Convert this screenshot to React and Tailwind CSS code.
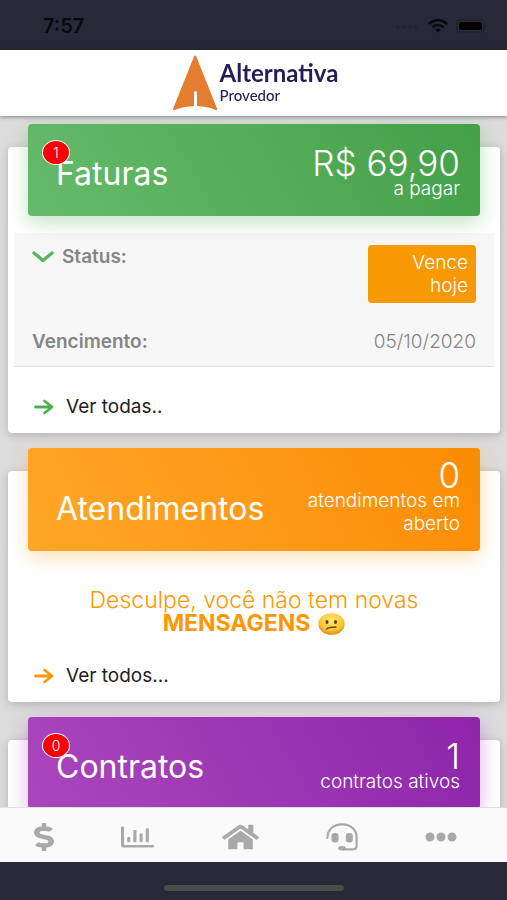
import { FaDollarSign, FaEllipsisH, FaHome, FaRegChartBar } from "react-icons/fa"

const NAV = [
  { label: "Faturas",      Icon: FaDollarSign,  size: "w-5 h-7" },
  { label: "Consumo",      Icon: FaRegChartBar, size: "w-[33px] h-7" },
  { label: "Início",       Icon: FaHome,        size: "w-[37px] h-7" },
  { label: "Atendimento",  Icon: HeadsetIcon,   size: "w-8 h-7" },
  { label: "Mais",         Icon: FaEllipsisH,   size: "w-8 h-8" },
]

const TONES = {
  green:  "bg-linear-60 from-[#66bb6a] to-[#43a047] shadow-[0_6px_20px_rgba(76,175,80,0.35)]",
  orange: "bg-linear-60 from-[#ffa726] to-[#fb8c00] shadow-[0_6px_20px_rgba(255,152,0,0.3)]",
  purple: "bg-linear-60 from-[#ab47bc] to-[#8e24aa] shadow-[0_6px_20px_rgba(156,39,176,0.35)]",
}

function HeadsetIcon(props) {
  return (
    <svg viewBox="0 0 32 28" fill="none" stroke="currentColor" strokeWidth="2.2" strokeLinecap="round" {...props}>
      <path d="M1.400 15C1.400 6.500 7.500 1.400 16 1.400S30.600 6.500 30.600 14.500V22.500c0 2.500-1 3.800-3.600 3.800H17"/>
      <ellipse cx="16" cy="25.200" rx="3.800" ry="2.200" fill="currentColor" stroke="none"/>
      <rect x="5.500" y="10" width="7" height="9.500" rx="3" fill="currentColor" stroke="none"/>
      <rect x="19.800" y="10" width="7" height="9.500" rx="3" fill="currentColor" stroke="none"/>
    </svg>
  )
}

function StatusBar() {
  return (
    <div className="h-[50px] flex-none flex items-center justify-between bg-[#282938] pl-[43px] pr-5 pt-0.5 text-[#08080f]">
      <span className="text-xl font-semibold">7:57</span>
      <div className="flex items-center gap-2">
        <svg className="w-6 h-1.5" viewBox="0 0 24 6" fill="#20212d">
          <circle cx="2" cy="4" r="1.5"/>
          <circle cx="8" cy="4" r="1.5"/>
          <circle cx="14" cy="4" r="1.5"/>
          <circle cx="20" cy="4" r="1.5"/>
        </svg>
        <svg className="w-5 h-3.5" viewBox="0 0 20 14" fill="none" stroke="currentColor" strokeWidth="2.6">
          <path d="M1 5.2C6-.1 14-.1 19 5.2"/>
          <path d="M4.4 8.4c3.2-3.2 8-3.2 11.2 0"/>
          <path d="M7 10.6c1.8-1.6 4.200-1.6 6 0L10 13.400z" fill="currentColor" stroke="none"/>
        </svg>
        <svg className="w-[31px] h-3.5" viewBox="0 0 31 14">
          <rect x="1" y="1" width="27" height="12" rx="4" fill="none" stroke="#1d1e29" strokeWidth="1.200"/>
          <rect x="3" y="3" width="23" height="8" rx="2.500" fill="#000"/>
          <path d="M29 5c1.500.500 1.500 3.500 0 4z" fill="#1d1e29"/>
        </svg>
      </div>
    </div>
  )
}

function Logo() {
  return (
    <div className="flex items-center gap-[3px] pl-1 text-[#241d56]">
      <svg className="w-11 h-14" viewBox="0 0 44 56" fill="#e47d30">
        <path d="M21 1.500c.8-1.300 1.700-1.300 2.300 0L44 53.500c.4 1.300-.2 1.900-1.500 1.400-5.500-2.300-11-3.500-18.500-3.900V36.500h-3V51C13.500 51.400 7.500 52.600 1.800 55 .4 55.500-.3 54.700.2 53.400z"/>
      </svg>
      <div className="flex flex-col font-[Lato,sans-serif]">
        <span className="text-2xl leading-6 font-bold">Alternativa</span>
        <span className="text-[15px] leading-5 font-medium">Provedor</span>
      </div>
    </div>
  )
}

function Badge({ children }) {
  return (
    <span className="absolute left-3.5 top-4 w-7 h-[25px] rounded-[50%] border border-white bg-[#fb0006] flex items-center justify-center text-sm font-light">
      {children}
    </span>
  )
}

function Card({ tone, title, value, caption, badge, children }) {
  return (
    <section className="rounded-sm bg-white shadow-[0_2px_10px_rgba(0,0,0,0.2)]">
      <div className="px-5">
        <header className={`relative -top-[23px] -mb-[23px] min-h-[92px] rounded-sm flex items-end justify-between pl-7 pr-5 pt-[13px] pb-4 text-white ${TONES[tone]}`}>
          <h2 className="mb-2 text-[32px] leading-9">{title}</h2>
          {badge && <Badge>{badge}</Badge>}
          <p className="w-[170px] flex flex-col text-right font-light">
            <span className="text-[35px] leading-7">{value}</span>
            <span className="text-[19px] leading-[23px]">{caption}</span>
          </p>
        </header>
      </div>
      {children}
    </section>
  )
}

function MoreLink({ color, children }) {
  return (
    <a href="#" className="flex items-center gap-3 px-[26px] text-[19px] leading-6 text-[#222]">
      <svg className={`w-5 h-4 ${color}`} viewBox="0 0 20 16" fill="none" stroke="currentColor" strokeWidth="2.800" strokeLinecap="round" strokeLinejoin="round">
        <path d="M1.500 8h16M10.500 2l7.500 6-7.500 6"/>
      </svg>
      {children}
    </a>
  )
}

function ConfusedFace() {
  return (
    <svg className="inline-block w-[27px] h-[22px] ml-2 align-[-4px]" viewBox="0 0 27 22" role="img" aria-label="confuso">
      <defs>
        <radialGradient id="face" cx="50%" cy="35%" r="65%">
          <stop offset="0" stopColor="#ffea72"/>
          <stop offset="0.650" stopColor="#f9c835"/>
          <stop offset="1" stopColor="#df9016"/>
        </radialGradient>
      </defs>
      <ellipse cx="13.500" cy="11" rx="13.200" ry="10.800" fill="url(#face)"/>
      <ellipse cx="9" cy="9" rx="1.500" ry="1.900" fill="#5e3c0c"/>
      <ellipse cx="17.500" cy="9" rx="1.500" ry="1.900" fill="#5e3c0c"/>
      <path d="M8.500 16c2.500-1.800 5.500-1.900 9.500-2" fill="none" stroke="#6b430c" strokeWidth="1.300" strokeLinecap="round"/>
    </svg>
  )
}

export default function App() {
  return (
    <div className="h-screen flex flex-col bg-[#282938] font-[Inter,sans-serif]">
      <StatusBar/>

      <header className="relative z-10 h-[66px] flex-none flex items-center justify-center bg-white shadow-[0_1px_4px_rgba(0,0,0,0.4)]">
        <Logo/>
      </header>

      <main className="flex-1 min-h-0 overflow-y-auto [scrollbar-width:none] bg-[#dcdcdc] pl-2 pr-[7px] pt-[31px] flex flex-col gap-[38px]">
        <Card tone="green" title="Faturas" value="R$ 69,90" caption="a pagar" badge="1">
          <dl className="mx-1.5 mt-[17px] px-[18px] py-3 border-b border-[#e2e2e2] bg-[#f7f7f7] text-[19px] leading-6 text-[#858585]">
            <div className="flex items-start justify-between">
              <dt className="flex items-center gap-2 font-semibold">
                <button type="button" aria-label="Recolher">
                  <svg className="w-[22px] h-3" viewBox="0 0 22 12" fill="none" stroke="#5cb460" strokeWidth="3.400" strokeLinecap="round" strokeLinejoin="round">
                    <path d="M2 2l9 7.500L20 2"/>
                  </svg>
                </button>
                Status:
              </dt>
              <dd className="w-[108px] rounded-sm bg-[#f89903] pl-8 pr-2 py-1.5 text-right font-light leading-[23px] text-white">Vence hoje</dd>
            </div>
            <div className="flex items-center justify-between pt-[27px]">
              <dt className="font-semibold">Vencimento:</dt>
              <dd className="font-light">05/10/2020</dd>
            </div>
          </dl>
          <div className="pt-7 pb-[14px]">
            <MoreLink color="text-[#4caf50]">Ver todas..</MoreLink>
          </div>
        </Card>

        <Card tone="orange" title="Atendimentos" value="0" caption="atendimentos em aberto">
          <p className="pt-[38px] px-12 text-center text-[23px] leading-[23px] font-light text-[#ff9800]">
            Desculpe, você não tem novas <strong className="font-bold">MENSAGENS</strong>
            <ConfusedFace/>
          </p>
          <div className="pt-[29px] pb-[14px]">
            <MoreLink color="text-[#ff9800]">Ver todos...</MoreLink>
          </div>
        </Card>

        <Card tone="purple" title="Contratos" value="1" caption="contratos ativos" badge="0">
          <div className="h-24"/>
        </Card>
      </main>

      <nav className="relative z-10 h-[55px] flex-none flex items-center justify-between bg-[#fafafa] border-t border-[#dedede] pl-[34px] pr-[50px] pt-1 text-[#a9a9a9]">
        {NAV.map(({ label, Icon, size }) => (
          <button key={label} type="button" aria-label={label}>
            <Icon className={size} preserveAspectRatio="none"/>
          </button>
        ))}
      </nav>

      <div className="h-[38px] flex-none flex items-center justify-center pt-3.5">
        <div className="w-[180px] h-1.5 rounded-full bg-[#4b4c4d]"/>
      </div>
    </div>
  )
}
